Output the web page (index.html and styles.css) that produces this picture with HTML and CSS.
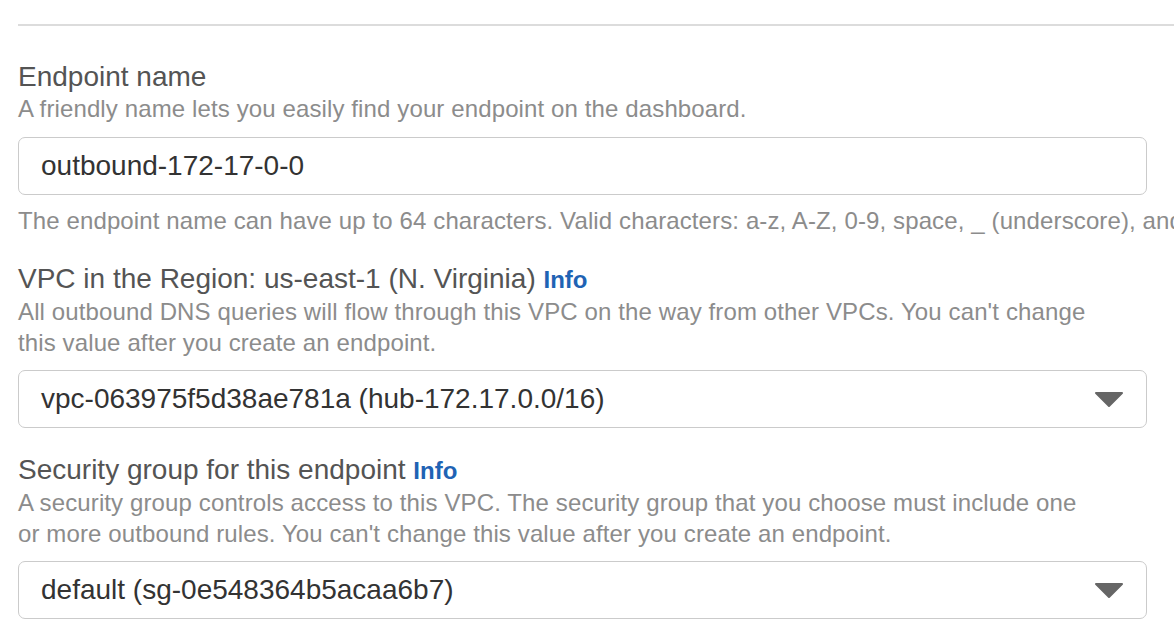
FILE: index.html
```html
<!DOCTYPE html>
<html lang="en">
<head>
<meta charset="utf-8">
<title>Endpoint configuration</title>
<link rel="stylesheet" href="styles.css">
</head>
<body>
<div class="page">
  <hr class="rule">
  <form class="form">
    <div class="field field-first">
      <div class="label">Endpoint name</div>
      <div class="desc">A friendly name lets you easily find your endpoint on the dashboard.</div>
      <div class="control">outbound-172-17-0-0</div>
      <div class="help">The endpoint name can have up to 64 characters. Valid characters: a-z, A-Z, 0-9, space, _ (underscore), and</div>
    </div>
    <div class="field">
      <div class="label">VPC in the Region: us-east-1 (N. Virginia) <a class="info">Info</a></div>
      <div class="desc">All outbound DNS queries will flow through this VPC on the way from other VPCs. You can't change this value after you create an endpoint.</div>
      <div class="control select">
        <span>vpc-063975f5d38ae781a (hub-172.17.0.0/16)</span>
        <svg class="caret" width="30" height="17" viewBox="0 0 30 17"><polygon points="2,2 28,2 15,15" fill="#666" stroke="#666" stroke-width="2" stroke-linejoin="round"/></svg>
      </div>
    </div>
    <div class="field">
      <div class="label">Security group for this endpoint <a class="info">Info</a></div>
      <div class="desc">A security group controls access to this VPC. The security group that you choose must include one or more outbound rules. You can't change this value after you create an endpoint.</div>
      <div class="control select">
        <span>default (sg-0e548364b5acaa6b7)</span>
        <svg class="caret" width="30" height="17" viewBox="0 0 30 17"><polygon points="2,2 28,2 15,15" fill="#666" stroke="#666" stroke-width="2" stroke-linejoin="round"/></svg>
      </div>
    </div>
  </form>
</div>
</body>
</html>
```

FILE: styles.css
```css
html, body {
  margin: 0;
  padding: 0;
  background: #fff;
  overflow: hidden;
}

body {
  font-family: "Liberation Sans", Arial, Helvetica, sans-serif;
  color: #555;
}

.page {
  padding: 24px 0 0 18px;
}

.rule {
  margin: 0;
  border: 0;
  height: 2px;
  background: #dcdcdc;
}

.form {
  display: flex;
  flex-direction: column;
  padding-top: 34px;
}

.field {
  display: flex;
  flex-direction: column;
  margin-bottom: 25px;
}

.field-first {
  margin-bottom: 26px;
}

.label {
  font-size: 28px;
  line-height: 33px;
  color: #545454;
  white-space: nowrap;
}

.info {
  font-size: 24px;
  font-weight: bold;
  color: #1f63b4;
  text-decoration: none;
}

.desc {
  font-size: 24px;
  line-height: 31px;
  letter-spacing: 0.12px;
  color: #8c8c8c;
  max-width: 1076px;
  margin-bottom: 12px;
}

.field-first .desc {
  margin-bottom: 13px;
}

.control {
  box-sizing: border-box;
  width: 1129px;
  height: 58px;
  border: 1px solid #cbcbcb;
  border-radius: 7px;
  padding: 0 22px;
  display: flex;
  align-items: center;
  font-size: 28px;
  color: #333;
  white-space: nowrap;
}

.select {
  justify-content: space-between;
  padding-right: 22px;
}

.caret {
  display: block;
  flex: none;
}

.help {
  margin-top: 10px;
  font-size: 24px;
  line-height: 31px;
  letter-spacing: 0.12px;
  color: #8c8c8c;
  white-space: nowrap;
}
```
